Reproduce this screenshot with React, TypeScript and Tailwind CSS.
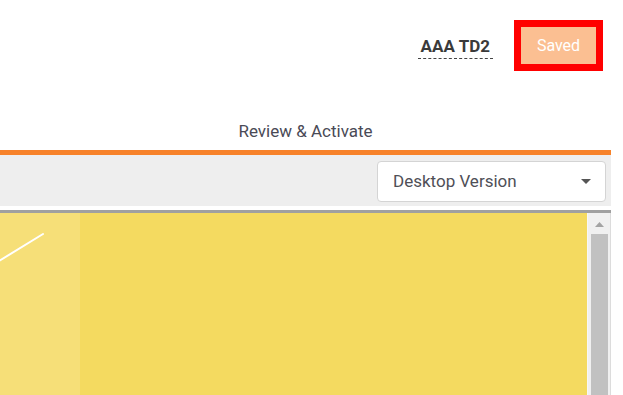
import React from "react";

export default function App() {
  return (
    <div className="w-[623px] h-[395px] overflow-hidden bg-white font-['Roboto',sans-serif]">
      <div className="w-[611px]">
        {/* header */}
        <div className="h-[110px] flex items-start justify-end pt-[20px] pr-[8px]">
          <div className="h-[51px] flex items-center mr-[21px]">
            <span className="px-[3px] pt-[3px] pb-[2px] text-[17px] font-bold leading-[20px] text-[#3a3a3a] border-b border-dashed border-[#444]">
              AAA TD2
            </span>
          </div>
          <button className="w-[89px] h-[51px] border-[7px] border-[#ff0000] bg-[#fbbf92] text-white text-[16px] leading-none flex items-center justify-center">
            Saved
          </button>
        </div>
        {/* tab row */}
        <div className="h-[45px] flex items-start justify-center pt-[11px] text-[17px] leading-[20px] text-[#4a4a56] border-b-[5px] border-[#f7822a]">
          Review &amp; Activate
        </div>
        {/* toolbar */}
        <div className="h-[51px] bg-[#eeeeee] flex justify-end items-start pt-[6px] pr-[5px]">
          <div className="w-[229px] h-[41px] bg-white border border-[#d4d4d4] rounded-[4px] flex items-center justify-between pl-[15px] pr-[14px] text-[17px] text-[#4f4f57]">
            <span>Desktop Version</span>
            <svg width="10" height="5" viewBox="0 0 10 5">
              <polygon points="0,0 10,0 5,5" fill="#555" />
            </svg>
          </div>
        </div>
        {/* preview frame */}
        <div className="mt-[4px] border-t-[3px] border-[#a0a0a0] h-[190px] flex">
          <div className="w-[80px] bg-[#f6df78] relative">
            <svg className="absolute left-0 top-0" width="80" height="60" viewBox="0 0 80 60">
              <line x1="-1" y1="48" x2="43" y2="21" stroke="#ffffff" strokeWidth="2" strokeLinecap="round" />
            </svg>
          </div>
          <div className="flex-1 bg-[#f4da60]" />
          <div className="w-[1px] bg-[#f7f7f7]" />
          <div className="w-[22px] bg-[#f0f0f0] flex flex-col items-center">
            <svg className="mt-[9px]" width="9" height="5" viewBox="0 0 9 5">
              <polygon points="0,5 9,5 4.5,0" fill="#a3a3a3" />
            </svg>
            <div className="mt-[7px] w-[17px] flex-1 bg-[#c1c1c1] ml-[1px]" />
          </div>
          <div className="w-[1px] bg-[#dcdcdc]" />
        </div>
      </div>
    </div>
  );
}
